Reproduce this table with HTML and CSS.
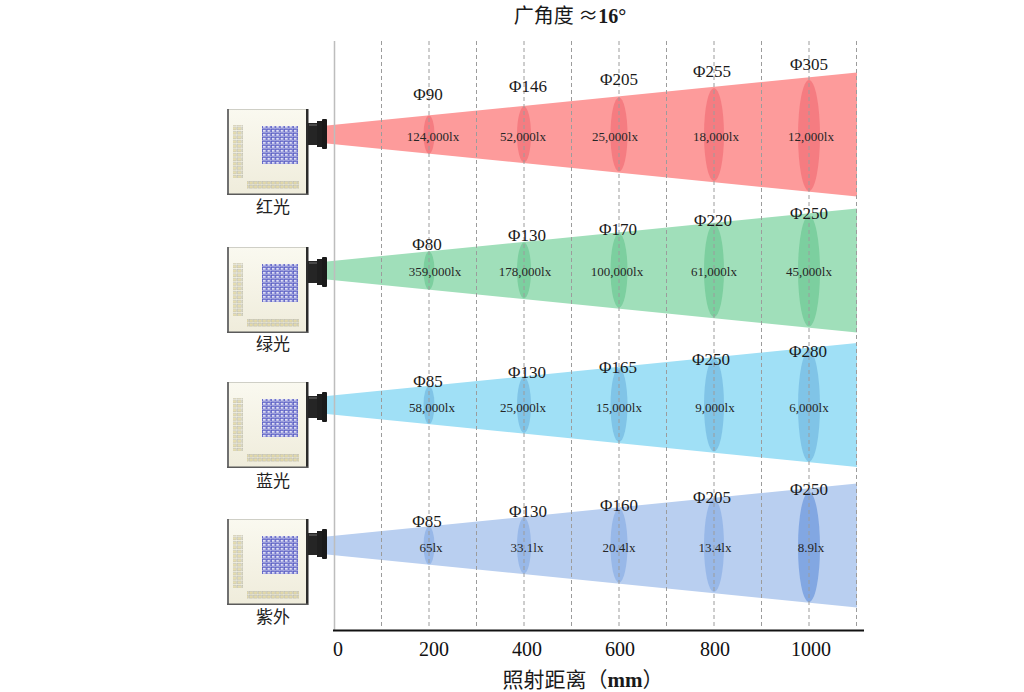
FILE: index.html
```html
<!DOCTYPE html>
<html lang="zh-CN">
<head>
<meta charset="utf-8">
<title>广角度 ≈16°</title>
<link rel="stylesheet" href="styles.css">
</head>
<body>
<div class="page">
  <header class="title"><span class="cjk">广角度</span> <b class="deg"><span class="cjk">≈</span>16°</b></header>

  <svg class="chart" viewBox="0 30 1024 634" width="1024" height="634" xmlns="http://www.w3.org/2000/svg">
    <defs>
      <linearGradient id="boxg" x1="0" y1="0" x2="0" y2="1">
        <stop offset="0" stop-color="#faf9f0"/>
        <stop offset="1" stop-color="#efecdb"/>
      </linearGradient>
      <pattern id="grid" width="4.4" height="4" patternUnits="userSpaceOnUse">
        <rect width="4.4" height="4" fill="#e2e2f5"/>
        <rect x="0.45" y="0.45" width="3.3" height="2.7" fill="none" stroke="#5257c2" stroke-width="0.75"/>
      </pattern>
      <pattern id="chipv" width="5" height="4.4" patternUnits="userSpaceOnUse">
        <rect x="0.6" y="0.6" width="3.6" height="2.8" fill="#e6ddb0" stroke="#b3b3a8" stroke-width="0.45"/>
      </pattern>
      <pattern id="chiph" width="4.4" height="4" patternUnits="userSpaceOnUse">
        <rect x="0.5" y="0.5" width="3.2" height="2.6" fill="#e4daa8" stroke="#b3b3a8" stroke-width="0.45"/>
      </pattern>
      <g id="device">
        <rect x="0" y="0" width="81" height="86" fill="url(#boxg)"/>
        <rect x="0" y="0" width="81" height="1" fill="#cfcfc6"/>
        <rect x="0" y="0" width="2" height="86" fill="#707070"/>
        <rect x="79" y="0" width="2.5" height="86" fill="#2b2b2b"/>
        <rect x="0" y="84.5" width="81" height="1.5" fill="#5a5a5a"/>
        <rect x="35" y="17" width="36" height="38" fill="url(#grid)"/>
        <rect x="6" y="16" width="10" height="53" fill="url(#chipv)"/>
        <rect x="20" y="72" width="52" height="8" fill="url(#chiph)"/>
        <rect x="81" y="14" width="10" height="22" fill="#252525"/>
        <rect x="90" y="12" width="5" height="26" fill="#1f1f1f"/>
        <rect x="95" y="10" width="5" height="30" rx="1" fill="#1a1a1a"/>
        <rect x="82" y="15" width="8" height="2" fill="#4a4a4a"/>
      </g>
    </defs>

    <!-- beams -->
    <g class="beam red">
      <polygon class="cone" points="327,125.5 857,72.5 857,196.5 327,143.5"/>
      <ellipse cx="429" cy="134.5" rx="5.5" ry="19"/>
      <ellipse cx="524" cy="134.5" rx="7" ry="28"/>
      <ellipse cx="619" cy="134.5" rx="8.5" ry="37"/>
      <ellipse cx="714" cy="134.5" rx="10" ry="46.5"/>
      <ellipse cx="809" cy="135.5" rx="11" ry="55.5"/>
    </g>
    <g class="beam green">
      <polygon class="cone" points="327,261.5 857,208.5 857,332.5 327,279.5"/>
      <ellipse cx="429" cy="270.5" rx="5.5" ry="19"/>
      <ellipse cx="524" cy="270.5" rx="7" ry="28"/>
      <ellipse cx="619" cy="270.5" rx="8.5" ry="37"/>
      <ellipse cx="714" cy="270.5" rx="10" ry="46.5"/>
      <ellipse cx="809" cy="271" rx="11" ry="55.5"/>
    </g>
    <g class="beam blue">
      <polygon class="cone" points="327,396 857,343 857,467 327,414"/>
      <ellipse cx="429" cy="405" rx="5.5" ry="19"/>
      <ellipse cx="524" cy="405" rx="7" ry="28"/>
      <ellipse cx="619" cy="405" rx="8.5" ry="37"/>
      <ellipse cx="714" cy="405" rx="10" ry="46.5"/>
      <ellipse cx="809" cy="406" rx="11" ry="55.5"/>
    </g>
    <g class="beam violet">
      <polygon class="cone" points="327,536.5 857,483.5 857,607.5 327,554.5"/>
      <ellipse cx="429" cy="545.5" rx="5.5" ry="19"/>
      <ellipse cx="524" cy="545.5" rx="7" ry="28"/>
      <ellipse cx="619" cy="545.5" rx="8.5" ry="37"/>
      <ellipse cx="714" cy="545.5" rx="10" ry="46.5"/>
      <ellipse class="deep" cx="809" cy="547" rx="11" ry="55"/>
    </g>

    <!-- devices -->
    <use href="#device" x="227" y="109"/>
    <use href="#device" x="227" y="247"/>
    <use href="#device" x="227" y="382"/>
    <use href="#device" x="227" y="519"/>

    <text class="dev" x="273" y="213">红光</text>
    <text class="dev" x="273" y="350">绿光</text>
    <text class="dev" x="273" y="487">蓝光</text>
    <text class="dev" x="273" y="623">紫外</text>

    <!-- grid -->
    <line class="yaxis" x1="334.5" y1="41" x2="334.5" y2="630"/>
    <g class="dash">
      <line x1="381.5" y1="41" x2="381.5" y2="629"/>
      <line x1="429" y1="41" x2="429" y2="629"/>
      <line x1="476.5" y1="41" x2="476.5" y2="629"/>
      <line x1="524" y1="41" x2="524" y2="629"/>
      <line x1="571.5" y1="41" x2="571.5" y2="629"/>
      <line x1="619" y1="41" x2="619" y2="629"/>
      <line x1="666.5" y1="41" x2="666.5" y2="629"/>
      <line x1="714" y1="41" x2="714" y2="629"/>
      <line x1="761.5" y1="41" x2="761.5" y2="629"/>
      <line x1="809" y1="41" x2="809" y2="629"/>
      <line x1="856.5" y1="41" x2="856.5" y2="629"/>
    </g>
    <line class="xaxis" x1="333" y1="630.5" x2="864" y2="630.5"/>

    <!-- diameter labels -->
    <g class="phi">
      <text x="428" y="100">Φ90</text>
      <text x="528" y="92">Φ146</text>
      <text x="619" y="85">Φ205</text>
      <text x="712" y="77">Φ255</text>
      <text x="809" y="70">Φ305</text>

      <text x="427" y="250">Φ80</text>
      <text x="527" y="241">Φ130</text>
      <text x="618" y="235">Φ170</text>
      <text x="713" y="226">Φ220</text>
      <text x="809" y="219">Φ250</text>

      <text x="428" y="387">Φ85</text>
      <text x="527" y="378">Φ130</text>
      <text x="618" y="373">Φ165</text>
      <text x="711" y="365">Φ250</text>
      <text x="808" y="357">Φ280</text>

      <text x="427" y="527">Φ85</text>
      <text x="528" y="517">Φ130</text>
      <text x="619" y="511">Φ160</text>
      <text x="712" y="503">Φ205</text>
      <text x="809" y="495">Φ250</text>
    </g>

    <!-- illuminance labels -->
    <g class="lux">
      <text x="433" y="141">124,000lx</text>
      <text x="523" y="141">52,000lx</text>
      <text x="615" y="141">25,000lx</text>
      <text x="716" y="141">18,000lx</text>
      <text x="811" y="141">12,000lx</text>

      <text x="435" y="275.5">359,000lx</text>
      <text x="525" y="275.5">178,000lx</text>
      <text x="617" y="275.5">100,000lx</text>
      <text x="714" y="275.5">61,000lx</text>
      <text x="809" y="275.5">45,000lx</text>

      <text x="432" y="411.5">58,000lx</text>
      <text x="523" y="411.5">25,000lx</text>
      <text x="619" y="411.5">15,000lx</text>
      <text x="715" y="411.5">9,000lx</text>
      <text x="809" y="411.5">6,000lx</text>

      <text x="431" y="551.5">65lx</text>
      <text x="527" y="551.5">33.1lx</text>
      <text x="619" y="551.5">20.4lx</text>
      <text x="715" y="551.5">13.4lx</text>
      <text x="811" y="551.5">8.9lx</text>
    </g>

    <!-- axis tick labels -->
    <g class="tick">
      <text x="338" y="656">0</text>
      <text x="434" y="656">200</text>
      <text x="527" y="656">400</text>
      <text x="620" y="656">600</text>
      <text x="715" y="656">800</text>
      <text x="811" y="656">1000</text>
    </g>
  </svg>

  <footer class="axis-title"><span class="cjk">照射距离（</span><b class="unit">mm</b><span class="cjk">）</span></footer>
</div>
</body>
</html>
```

FILE: styles.css
```css
html, body {
  margin: 0;
  padding: 0;
  background: #ffffff;
}

.page {
  width: 1024px;
  height: 692px;
  display: flex;
  flex-direction: column;
  overflow: hidden;
  color: #1a1a1a;
}

.cjk {
  font-family: "Noto Sans CJK SC", "Noto Sans", sans-serif;
  font-weight: 400;
}

.title {
  flex: none;
  height: 30px;
  line-height: 30px;
  padding-left: 116px;
  text-align: center;
  font-size: 20px;
  font-family: "Noto Sans CJK SC", sans-serif;
  white-space: nowrap;
}

.title .deg {
  font-family: "Liberation Serif", serif;
  font-weight: 700;
}

.chart {
  flex: none;
  display: block;
  width: 1024px;
  height: 634px;
}

.axis-title {
  flex: none;
  height: 28px;
  line-height: 28px;
  padding-left: 142px;
  text-align: center;
  font-size: 21px;
  white-space: nowrap;
}

.axis-title .unit {
  font-family: "Liberation Serif", serif;
  font-weight: 700;
}

/* beams */
.beam.red .cone { fill: #fd9b9b; }
.beam.red ellipse { fill: #f57c81; }
.beam.green .cone { fill: #a0dfba; }
.beam.green ellipse { fill: #7ccf9f; }
.beam.blue .cone { fill: #a0e0f6; }
.beam.blue ellipse { fill: #80c4e7; }
.beam.violet .cone { fill: #b9cff0; }
.beam.violet ellipse { fill: #98b8e8; }
.beam.violet ellipse.deep { fill: #82a7e2; }

/* grid */
.yaxis {
  stroke: #bdbdbd;
  stroke-width: 1.5;
}

.dash line {
  stroke: #9c9c9c;
  stroke-width: 1;
  stroke-dasharray: 4 3;
}

.xaxis {
  stroke: #111111;
  stroke-width: 2;
}

/* texts */
.dev {
  font-family: "Noto Sans CJK SC", sans-serif;
  font-size: 17px;
  fill: #222222;
  text-anchor: middle;
}

.phi text {
  font-family: "Liberation Serif", serif;
  font-size: 17px;
  fill: #1a1a1a;
  text-anchor: middle;
}

.lux text {
  font-family: "Liberation Serif", serif;
  font-size: 13px;
  fill: #262626;
  text-anchor: middle;
}

.tick text {
  font-family: "Liberation Serif", serif;
  font-size: 20px;
  fill: #111111;
  text-anchor: middle;
}
```
